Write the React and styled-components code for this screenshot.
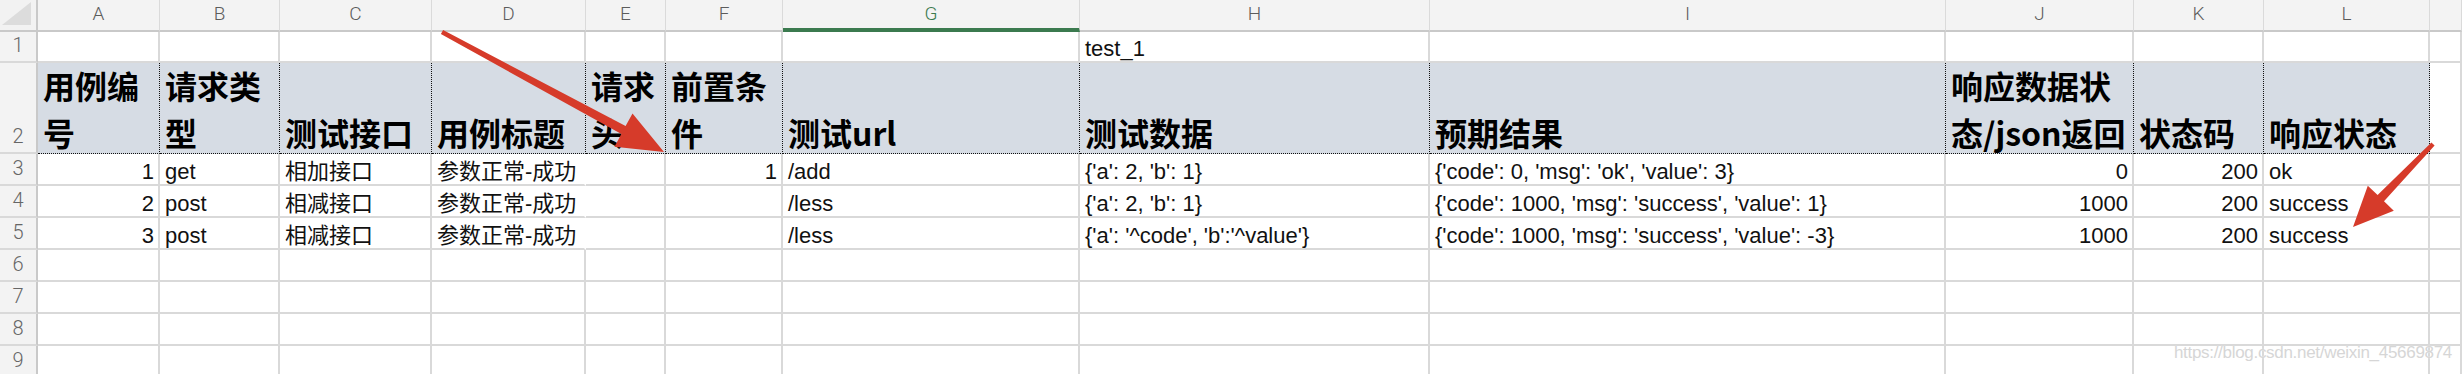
import React from 'react';
import styled, { createGlobalStyle } from 'styled-components';

const COLS = '38px 122px 120px 152px 154px 80px 117px 297px 350px 516px 188px 130px 166px 1fr';
const LETTERS = ['A', 'B', 'C', 'D', 'E', 'F', 'G', 'H', 'I', 'J', 'K', 'L', ''];
const RIGHT = [0, 5, 9, 10];

const GlobalStyle = createGlobalStyle`
  html, body {
    margin: 0;
    padding: 0;
    background: #fff;
  }
  body {
    font-family: "Liberation Sans", "Noto Sans CJK SC", sans-serif;
  }
`

const Page = styled.div`
  position: relative;
  width: 2462px;
  height: 374px;
  overflow: hidden;
  background: #fff;
`

const Row = styled.div`
  display: grid;
  grid-template-columns: ${COLS};
  height: ${p => p.$h}px;
`

const Corner = styled.div`
  display: flex;
  padding: 2px 5px 5px 2px;
  background: #f2f2f2;
  border-right: 2px solid #c9c9c9;
  border-bottom: 2px solid #c9c9c9;
`

const Triangle = styled.div`
  flex: 1;
  background: #dcdcdc;
  clip-path: polygon(0 100%, 100% 0, 100% 100%);
`

const ColHead = styled.div`
  display: flex;
  align-items: center;
  justify-content: center;
  padding-bottom: ${p => (p.$active ? 2 : 4)}px;
  background: #f3f3f3;
  border-right: 1px solid #dadada;
  border-bottom: ${p => (p.$active ? '4px solid #3b7a4f' : '2px solid #c9c9c9')};
  color: ${p => (p.$active ? '#3b7a4f' : '#5c5c5c')};
  font-family: Roboto, "Liberation Sans", sans-serif;
  font-weight: 300;
  font-size: 19px;
`

const RowNum = styled.div`
  display: flex;
  align-items: flex-end;
  justify-content: center;
  padding-bottom: 4px;
  background: #f3f3f3;
  border-right: 2px solid #c9c9c9;
  border-bottom: 2px solid #d9d9d9;
  color: #666;
  font-family: Roboto, "Liberation Sans", sans-serif;
  font-weight: 300;
  font-size: 20px;
`

const Cell = styled.div`
  display: flex;
  align-items: flex-end;
  justify-content: ${p => (p.$right ? 'flex-end' : 'flex-start')};
  min-width: 0;
  padding: 0 4px 0 5px;
  border-right: 2px solid ${p => (p.$bleed ? 'transparent' : '#d9d9d9')};
  border-bottom: 2px solid #d9d9d9;
  overflow: ${p => (p.$bleed ? 'visible' : 'hidden')};
  white-space: nowrap;
  color: #111;
  font-size: 22px;
  line-height: 24px;
`

const HeadCell = styled.div`
  display: flex;
  align-items: flex-end;
  min-width: 0;
  padding: 0 4px 0 5px;
  background: #d6dce4;
  border-right: 1px dotted #111;
  border-bottom: 1px dotted #111;
  overflow: hidden;
  color: #000;
  font-family: "Noto Sans CJK SC", sans-serif;
  font-weight: 700;
  font-size: 32px;
  line-height: 47px;
`

const HeadText = styled.span`
  display: block;
  margin-bottom: -3px;
  word-break: break-all;
`

const Overlay = styled.svg`
  position: absolute;
  left: 0;
  top: 0;
  pointer-events: none;
`

const Watermark = styled.div`
  position: absolute;
  right: 10px;
  top: 343px;
  color: #d6d6d6;
  font-family: "Liberation Sans", sans-serif;
  font-size: 17px;
  letter-spacing: -0.3px;
  text-shadow: 0 0 1px rgba(255, 255, 255, 0.9);
  pointer-events: none;
`

const headers = [
  '用例编号', '请求类型', '测试接口', '用例标题', '请求头', '前置条件',
  '测试url', '测试数据', '预期结果', '响应数据状态/json返回', '状态码', '响应状态',
];

const data = [
  ['1', 'get', '相加接口', '参数正常-成功', '', '1', '/add', "{'a': 2, 'b': 1}", "{'code': 0, 'msg': 'ok', 'value': 3}", '0', '200', 'ok'],
  ['2', 'post', '相减接口', '参数正常-成功', '', '', '/less', "{'a': 2, 'b': 1}", "{'code': 1000, 'msg': 'success', 'value': 1}", '1000', '200', 'success'],
  ['3', 'post', '相减接口', '参数正常-成功', '', '', '/less', "{'a': '^code', 'b':'^value'}", "{'code': 1000, 'msg': 'success', 'value': -3}", '1000', '200', 'success'],
];

const blank = Array(13).fill('');

const DataRow = ({ num, values, h = 32 }) => (
  <Row $h={h}>
    <RowNum>{num}</RowNum>
    {values.map((v, i) => (
      <Cell key={i} $right={RIGHT.includes(i)} $bleed={i === 3 && v !== ''}>
        {v}
      </Cell>
    ))}
  </Row>
)

const Arrows = () => (
  <Overlay width="2462" height="374" viewBox="0 0 2462 374">
    <polygon
      fill="#d63b2a"
      points="440.9,33.9 621.4,134.1 614.5,146.8 664,152 632.5,113.4 625.6,126.1 443.1,30.1"
    />
    <polygon
      fill="#d63b2a"
      points="2431.4,142.5 2377.6,195.1 2367.8,185.7 2353,227 2393.8,210.7 2384,201.3 2434.6,145.5"
    />
  </Overlay>
)

const App = () => {
  const row1 = [...blank];
  row1[7] = 'test_1';

  return (
    <Page>
      <GlobalStyle />
      <Row $h={32}>
        <Corner><Triangle /></Corner>
        {LETTERS.map((l, i) => (
          <ColHead key={i} $active={l === 'G'}>{l}</ColHead>
        ))}
      </Row>
      <DataRow num="1" values={row1} h={31} />
      <Row $h={91}>
        <RowNum>2</RowNum>
        {headers.map(t => (
          <HeadCell key={t}><HeadText>{t}</HeadText></HeadCell>
        ))}
        <Cell />
      </Row>
      {data.map((r, i) => (
        <DataRow key={i} num={i + 3} values={[...r, '']} />
      ))}
      {[6, 7, 8, 9].map(n => (
        <DataRow key={n} num={n} values={blank} />
      ))}
      <Arrows />
      <Watermark>https://blog.csdn.net/weixin_45669874</Watermark>
    </Page>
  )
}

export default App;
